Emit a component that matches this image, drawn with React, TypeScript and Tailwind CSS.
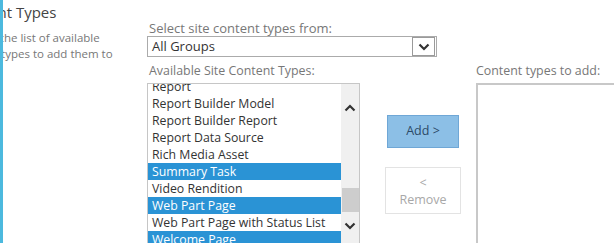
import React from "react";

const items: { label: string; selected?: boolean }[] = [
  { label: "Report" },
  { label: "Report Builder Model" },
  { label: "Report Builder Report" },
  { label: "Report Data Source" },
  { label: "Rich Media Asset" },
  { label: "Summary Task", selected: true },
  { label: "Video Rendition" },
  { label: "Web Part Page", selected: true },
  { label: "Web Part Page with Status List" },
  { label: "Welcome Page", selected: true },
];

function Chevron({ up = false, className = "" }: { up?: boolean; className?: string }) {
  return (
    <svg width="12" height="8" viewBox="0 0 12 8" className={className}>
      <path
        d={up ? "M1.5 6.5 L6 2 L10.5 6.5" : "M1.5 1.5 L6 6 L10.5 1.5"}
        fill="none"
        stroke="#333"
        strokeWidth="2.2"
      />
    </svg>
  );
}

export default function App() {
  return (
    <div
      className="w-[614px] h-[243px] overflow-hidden bg-white flex"
      style={{ fontFamily: '"Open Sans", "Noto Sans", sans-serif' }}
    >
      <div className="w-[3px] shrink-0 bg-[#4cb9de]" />
      <div className="w-[144px] shrink-0 overflow-hidden">
        <div className="-ml-[47px] mt-[2px] whitespace-nowrap text-[15px] leading-[20px] text-[#444]">
          Content Types
        </div>
        <div className="mt-[8px] text-[11.5px] leading-[16px] text-[#777] whitespace-nowrap">
          <div className="-ml-[67px]">Select from the list of available</div>
          <div className="-ml-[68px]">site content types to add them to</div>
        </div>
      </div>
      <div className="flex flex-col">
        <div className="pt-[20px] pl-[2px] h-[36px] text-[13px] leading-[16px] text-[#777] whitespace-nowrap">
          Select site content types from:
        </div>
        <div className="w-[290px] h-[21px] border border-[#ababab] flex items-center">
          <div className="flex-1 pl-[4px] text-[13px] leading-[19px] text-[#333]">All Groups</div>
          <div className="w-[23px] h-[19px] mr-[1px] border border-[#9a9a9a] flex items-center justify-center">
            <Chevron />
          </div>
        </div>
        <div className="flex mt-[3px]">
          <div className="flex flex-col">
            <div className="pl-[2px] h-[23px] pt-[3px] text-[12.4px] leading-[16px] text-[#777] whitespace-nowrap">
              Available Site Content Types:
            </div>
            <div className="w-[213px] h-[170px] border border-[#c6c6c6] flex">
              <div className="flex-1 overflow-hidden">
                <div className="-mt-[6px]">
                  {items.map((it) => (
                    <div
                      key={it.label}
                      className={
                        "h-[17px] pl-[4px] text-[12.3px] leading-[17px] whitespace-nowrap " +
                        (it.selected ? "bg-[#2a93d5] text-white" : "text-[#333]")
                      }
                    >
                      {it.label}
                    </div>
                  ))}
                </div>
              </div>
              <div className="w-[18px] bg-[#f0f0f0] flex flex-col items-center">
                <Chevron up className="mt-[20px]" />
                <div className="mt-[76px] w-[17px] h-[24px] bg-[#cdcdcd]" />
                <Chevron className="mt-[10px]" />
              </div>
            </div>
          </div>
          <div className="w-[116px] shrink-0 flex flex-col pl-[25px] pt-[55px]">
            <button className="ml-[2px] w-[72px] h-[33px] bg-[#8cbfe6] border border-[#6fa7d6] text-[12.5px] text-[#2c4a66]">
              Add &gt;
            </button>
            <button className="mt-[19px] w-[76px] h-[47px] bg-white border border-[#e3e3e3] text-[12.5px] leading-[17px] text-[#a8a8a8] flex flex-col items-center justify-center">
              <span>&lt;</span>
              <span>Remove</span>
            </button>
          </div>
          <div className="flex flex-col">
            <div className="h-[23px] pt-[3px] text-[12.4px] leading-[16px] text-[#777] whitespace-nowrap">
              Content types to add:
            </div>
            <div className="w-[150px] h-[170px] border-2 border-[#c8c8c8]" />
          </div>
        </div>
      </div>
    </div>
  );
}
